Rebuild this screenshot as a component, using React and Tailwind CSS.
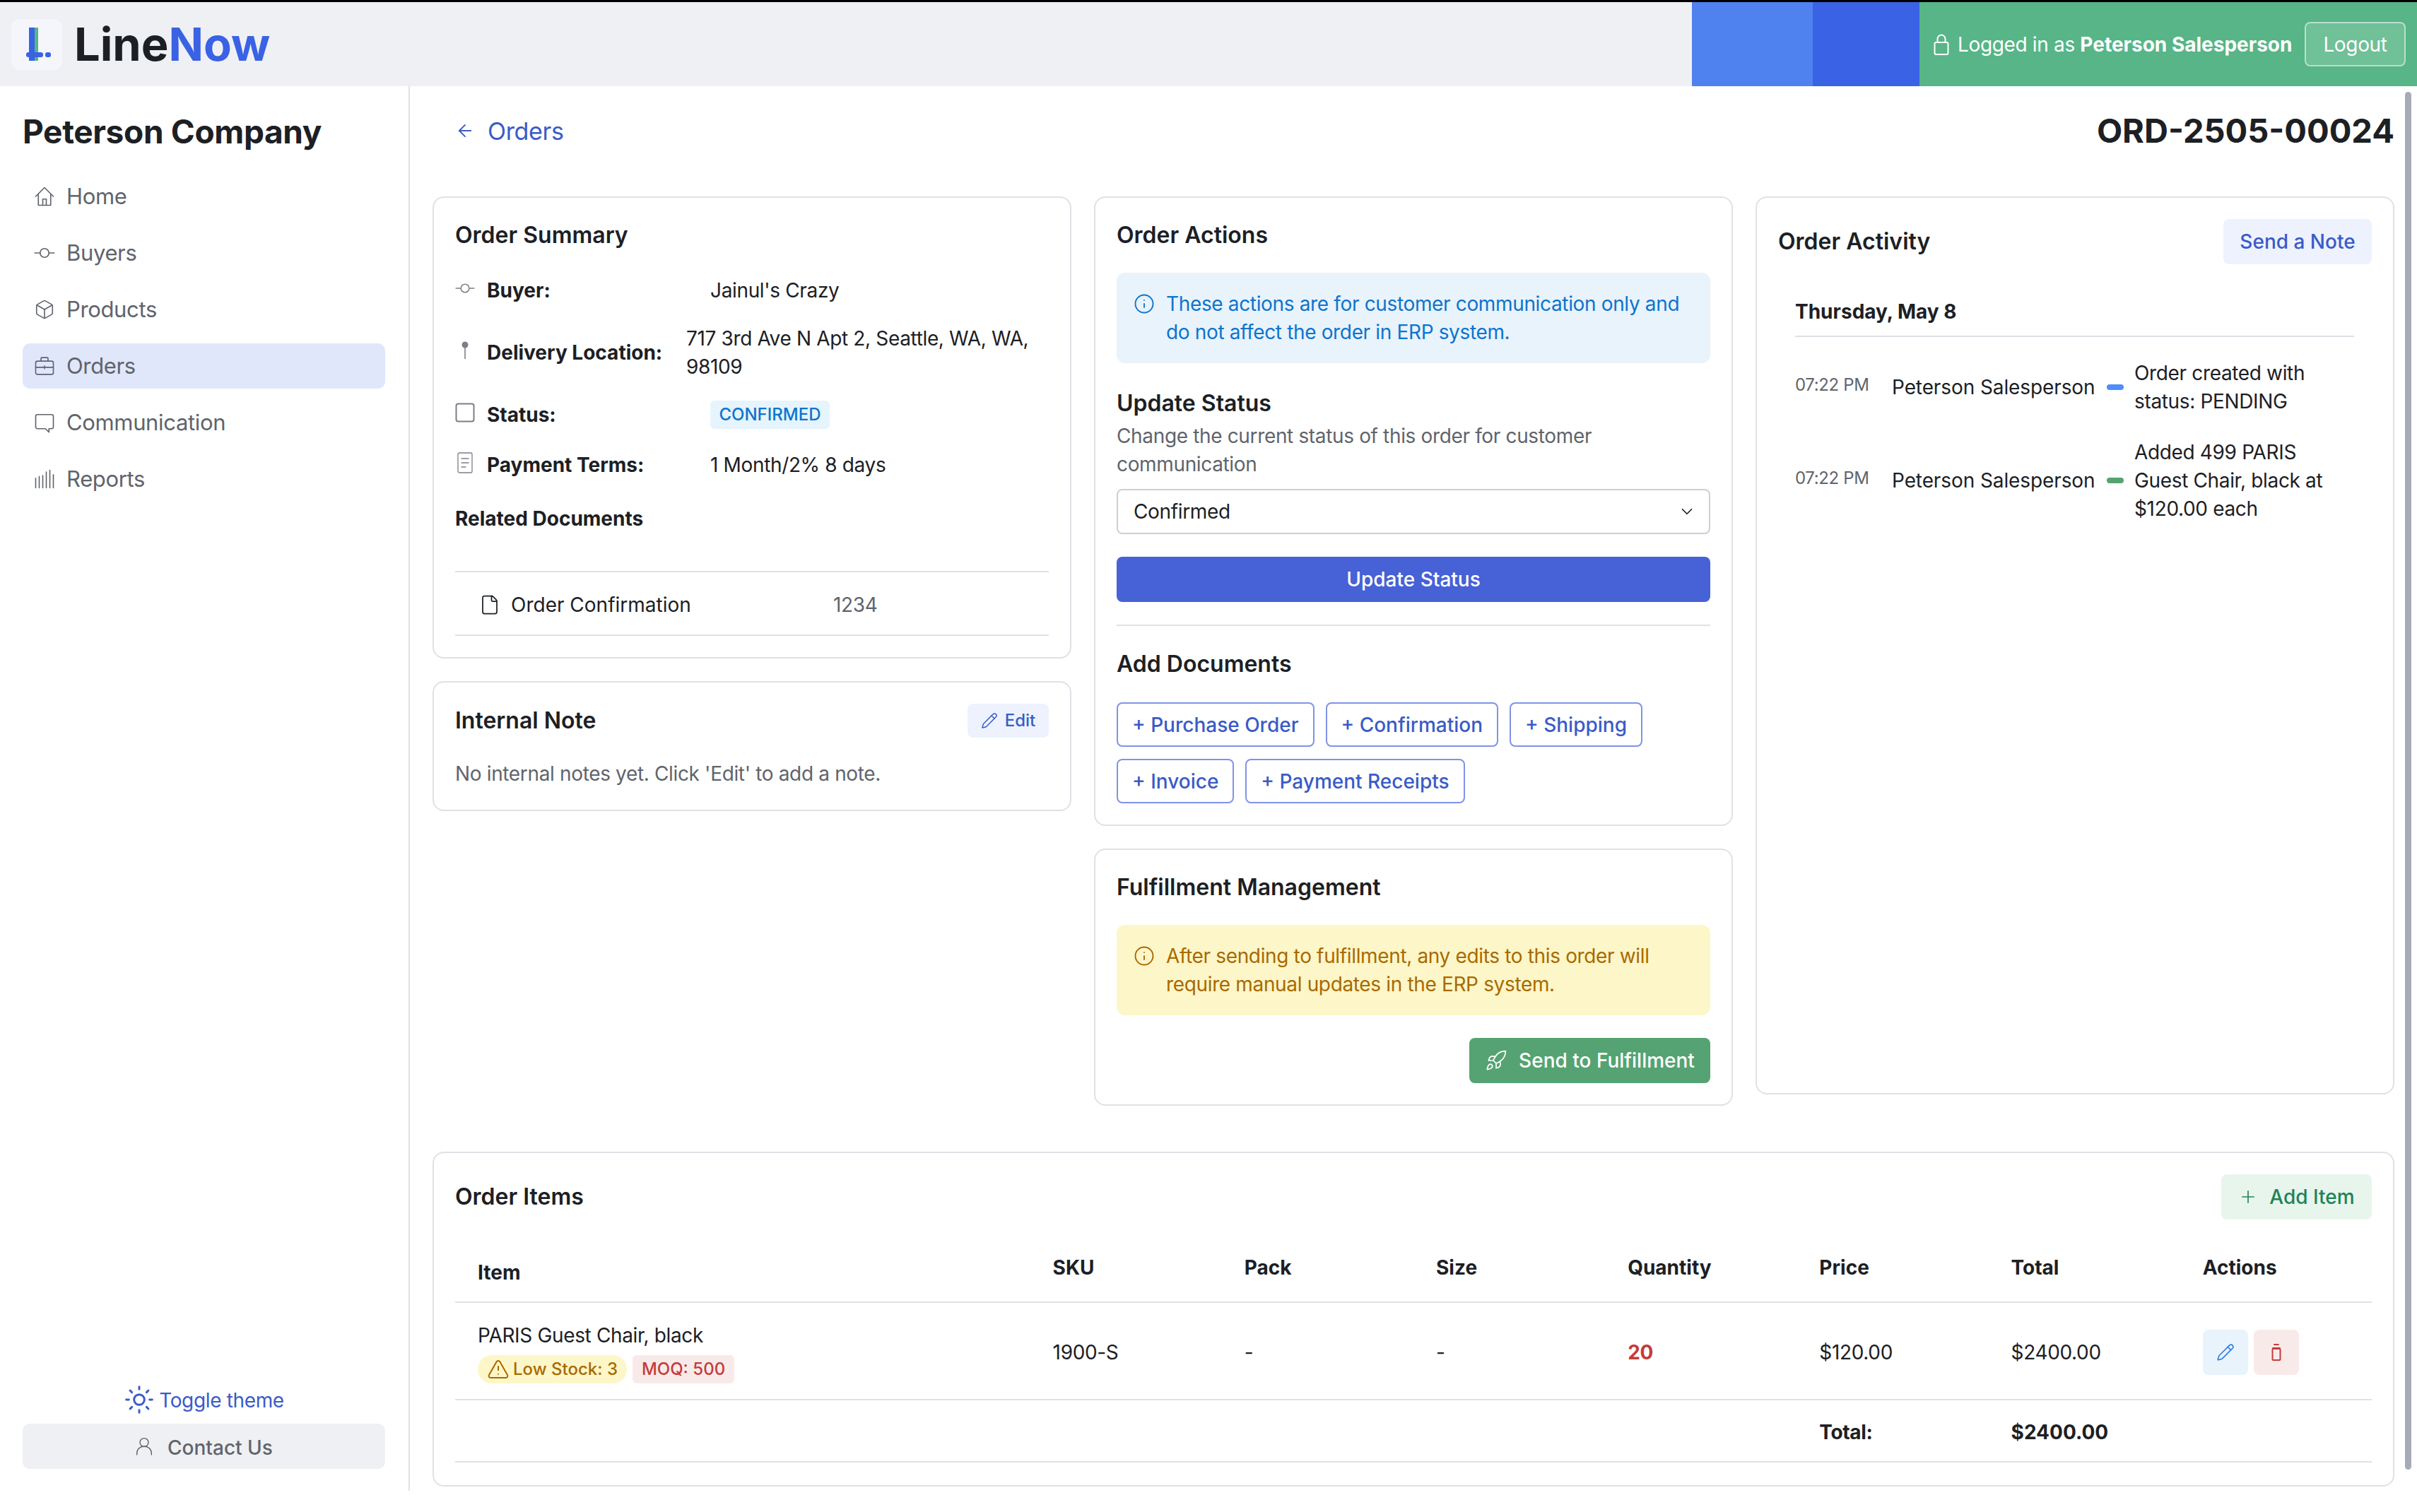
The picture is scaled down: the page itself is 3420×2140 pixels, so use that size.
import React from "react";
import { ArrowLeft, ChevronDown, File, Info, Pencil, Plus, Rocket, Sun, Box, TriangleAlert } from "lucide-react";

const Ico = ({ children, className = "", w = 24, h = 24 }) => (
  <svg viewBox={`0 0 ${w} ${h}`} fill="none" stroke="currentColor" strokeWidth="1.3" strokeLinecap="round" strokeLinejoin="round" className={className}>
    {children}
  </svg>
);

const HomeIcon = ({ className }) => (
  <Ico className={className}>
    <path d="M2 12 12 2l10 10" />
    <path d="M5 9.5V22h14V9.5" />
    <path d="M10 22v-7h4v7" />
  </Ico>
);
const CommitIcon = ({ className }) => (
  <Ico className={className}>
    <circle cx="12" cy="12" r="5" />
    <path d="M1 12h6M17 12h6" />
  </Ico>
);
const BriefIcon = ({ className }) => (
  <Ico className={className}>
    <rect x="2" y="6.5" width="20" height="15" rx="2" />
    <path d="M8 6.5V3.5a1 1 0 0 1 1-1h6a1 1 0 0 1 1 1v3" />
    <path d="M2 13.5h20M12 12v3" />
  </Ico>
);
const ChatIcon = ({ className }) => (
  <Ico className={className}>
    <path d="M4 3h16a2 2 0 0 1 2 2v12a2 2 0 0 1-2 2h-3v4l-4-4H4a2 2 0 0 1-2-2V5a2 2 0 0 1 2-2Z" />
  </Ico>
);
const BarsIcon = ({ className }) => (
  <Ico className={className}>
    <path d="M2 22v-11M6 22v-13M10 22v-14M14 22v-18M18 22V2M22 22V7" />
  </Ico>
);
const PinIcon = ({ className }) => (
  <svg viewBox="0 0 14 26" fill="none" className={className}>
    <circle cx="7" cy="5" r="4.5" fill="currentColor" />
    <path d="M7 9v16" stroke="currentColor" strokeWidth="1.6" />
  </svg>
);
const DocIcon = ({ className }) => (
  <Ico className={className} w={22} h={30}>
    <rect x="1" y="1" width="20" height="28" rx="2" />
    <path d="M6 9h10M6 15h10M6 21h6" />
  </Ico>
);
const SquareIcon = ({ className }) => (
  <Ico className={className} w={28} h={28}>
    <rect x="1.5" y="1.5" width="25" height="25" rx="3" strokeWidth="2" />
  </Ico>
);
const LockIcon = ({ className }) => (
  <Ico className={className} w={22} h={30}>
    <rect x="1.5" y="12" width="19" height="17" rx="2" strokeWidth="2" />
    <path d="M5.5 12V7a5.5 5.5 0 0 1 11 0v5" strokeWidth="2" />
  </Ico>
);
const UserIcon = ({ className }) => (
  <Ico className={className}>
    <circle cx="12" cy="7" r="5.5" />
    <path d="M2.5 23v-2a9.5 9 0 0 1 19 0v2" />
  </Ico>
);
const TrashIcon = ({ className }) => (
  <Ico className={className} w={18} h={26}>
    <path d="M4 7h10M6 2h6" strokeWidth="2" />
    <rect x="3.5" y="8" width="11" height="16" rx="1" strokeWidth="2" />
  </Ico>
);

const NavItem = ({ icon: I, label, active }) => (
  <div className={`flex items-center h-[64px] rounded-[10px] pl-[16px] text-[31px] text-[#60646c] ${active ? "bg-[#e0e7fb]" : ""}`}>
    <I className="w-[30px] h-[30px] mr-[16px] shrink-0" strokeWidth={1.3} />
    {label}
  </div>
);

const Card = ({ className = "", children }) => (
  <section className={`border-2 border-[#e0e1e6] rounded-[16px] p-[30px] bg-white ${className}`}>{children}</section>
);
const H = ({ children, className = "" }) => (
  <h2 className={`text-[32px] leading-[46px] font-semibold tracking-normal text-[#1c2024] ${className}`}>{children}</h2>
);

const Field = ({ icon, label, className = "", children }) => (
  <div className={`flex items-center ${className}`}>
    <span className="w-[28px] mr-[17px] flex justify-center shrink-0 text-[#7b7f87] mb-[6px]">{icon}</span>
    <span className="w-[316px] shrink-0 text-[28px] leading-[40px] font-bold tracking-normal text-[#1c2024]">{label}</span>
    {children}
  </div>
);

const DocBtn = ({ children }) => (
  <button className="h-[63px] px-[20px] border-2 border-[#8093e6] rounded-[8px] text-[28px] tracking-normal text-[#3a5bc7] font-medium bg-white">{children}</button>
);

const Th = ({ children, className = "" }) => (
  <th className={`text-left align-top text-[28px] leading-[40px] font-bold tracking-normal text-[#1c2024] pt-[25px] ${className}`}>{children}</th>
);
const Td = ({ children, className = "", colSpan }) => (
  <td colSpan={colSpan} className={`text-[28px] leading-[40px] text-[#1c2024] align-middle pt-[4px] ${className}`}>{children}</td>
);

export default function App() {
  return (
    <div className="w-full h-[2140px] bg-white font-['Inter',sans-serif] tracking-[-0.35px] overflow-hidden">
      <header className="h-[122px] border-t-[3px] border-black bg-[#eff0f3] flex">
        <div className="flex items-center pl-[16px]">
          <div className="w-[72px] h-[72px] rounded-[12px] bg-[#f4f6fb] flex items-center justify-center">
            <svg viewBox="0 0 72 72" className="w-[72px] h-[72px]">
              <rect x="25" y="12" width="8" height="47" fill="#3a62e4" />
              <rect x="33" y="12" width="5" height="47" fill="#57b587" />
              <rect x="21" y="47" width="24" height="7" rx="3" fill="#3a62e4" />
              <rect x="48" y="47" width="8" height="7" rx="3" fill="#3a62e4" />
            </svg>
          </div>
          <div className="ml-[17px] text-[65px] leading-none font-bold tracking-normal text-[#1c2024]">
            Line<span className="text-[#3a62e4]">Now</span>
          </div>
        </div>
        <div className="flex-1" />
        <div className="w-[171px] bg-[#4f82ee]" />
        <div className="w-[151px] bg-[#3a62e4]" />
        <div className="w-[704px] bg-[#57b587] flex items-center pl-[20px] text-white">
          <LockIcon className="w-[22px] h-[30px]" />
          <span className="ml-[12px] w-[491px] text-[28px] leading-[40px] whitespace-nowrap">
            Logged in as <b className="font-bold tracking-normal">Peterson Salesperson</b>
          </span>
          <button className="w-[143px] h-[63px] rounded-[8px] border-2 border-white/50 bg-white/15 text-[28px] text-white">Logout</button>
        </div>
      </header>

      <div className="flex h-[1988px]">
        <aside className="w-[580px] shrink-0 border-r-2 border-[#e0e1e6] flex flex-col pl-[32px] pr-[33px] pt-[36px] pb-[31px]">
          <h1 className="text-[46px] leading-[56px] font-bold text-[#1c2024] whitespace-nowrap">Peterson Company</h1>
          <nav className="mt-[32px] flex flex-col gap-[16px]">
            <NavItem icon={HomeIcon} label="Home" />
            <NavItem icon={CommitIcon} label="Buyers" />
            <NavItem icon={Box} label="Products" />
            <NavItem icon={BriefIcon} label="Orders" active />
            <NavItem icon={ChatIcon} label="Communication" />
            <NavItem icon={BarsIcon} label="Reports" />
          </nav>
          <div className="mt-auto flex items-center justify-center text-[#3a5bc7] text-[28px] leading-[40px] mb-[12px]">
            <Sun className="w-[44px] h-[44px] mr-[6px]" strokeWidth={1.6} />
            <span className="pt-[2px]">Toggle theme</span>
          </div>
          <button className="h-[64px] rounded-[10px] bg-[#eff0f3] flex items-center justify-center text-[28px] tracking-normal text-[#60646c] font-medium">
            <UserIcon className="w-[26px] h-[32px] mr-[20px]" />
            <span className="pt-[3px]">Contact Us</span>
          </button>
        </aside>

        <main className="flex-1 relative overflow-hidden pl-[32px] pr-[32px] pt-[35px]">
          <div className="flex items-center justify-between h-[56px]">
            <div className="flex items-center pl-[32px] text-[#3a5bc7] text-[34px]">
              <ArrowLeft className="w-[28px] h-[28px] mr-[18px]" strokeWidth={1.6} />
              Orders
            </div>
            <div className="text-[47px] font-bold tracking-normal text-[#1c2024]">ORD-2505-00024</div>
          </div>

          <div className="mt-[65px] grid grid-cols-3 gap-x-[32px] items-start">
            <div className="flex flex-col gap-[32px]">
              <Card>
                <H>Order Summary</H>
                <Field className="mt-[35px]" label="Buyer:" icon={<CommitIcon className="w-[28px] h-[28px]" />}>
                  <span className="text-[28px] leading-[40px] text-[#1c2024]">Jainul's Crazy</span>
                </Field>
                <div className="mt-[28px] flex items-center">
                  <span className="w-[28px] mr-[17px] flex justify-center shrink-0 text-[#7b7f87] mb-[6px]"><PinIcon className="w-[14px] h-[26px]" /></span>
                  <span className="w-[282px] shrink-0 text-[28px] leading-[40px] font-bold tracking-normal text-[#1c2024]">Delivery Location:</span>
                  <span className="text-[28px] leading-[40px] text-[#1c2024]">717 3rd Ave N Apt 2, Seattle, WA, WA, 98109</span>
                </div>
                <Field className="mt-[28px]" label="Status:" icon={<SquareIcon className="w-[28px] h-[28px]" />}>
                  <span className="h-[40px] w-[169px] rounded-[6px] bg-[#e6f4fe] text-[#0d74ce] text-[24px] tracking-normal font-medium flex items-center justify-center">CONFIRMED</span>
                </Field>
                <Field className="mt-[31px]" label="Payment Terms:" icon={<DocIcon className="w-[22px] h-[30px]" />}>
                  <span className="text-[28px] leading-[40px] text-[#1c2024]">1 Month/2% 8 days</span>
                </Field>
                <div className="mt-[36px] text-[28px] leading-[40px] font-bold tracking-normal text-[#1c2024]">Related Documents</div>
                <div className="mt-[54px] border-y-2 border-[#e0e1e6] h-[92px] flex items-center pl-[34px] pt-[3px] text-[28px]">
                  <File className="w-[30px] h-[32px] text-[#1c2024]" strokeWidth={1.4} />
                  <span className="ml-[15px] w-[456px] tracking-normal text-[#1c2024]">Order Confirmation</span>
                  <span className="text-[#60646c]">1234</span>
                </div>
              </Card>
              <Card>
                <div className="flex items-center justify-between">
                  <H>Internal Note</H>
                  <button className="h-[48px] w-[115px] rounded-[8px] bg-[#edf2fe] text-[#3a5bc7] text-[24px] tracking-normal font-medium flex items-center justify-center">
                    <Pencil className="w-[24px] h-[24px] mr-[10px]" strokeWidth={1.5} />
                    Edit
                  </button>
                </div>
                <p className="mt-[31px] mb-[1px] text-[28px] leading-[40px] text-[#60646c]">No internal notes yet. Click 'Edit' to add a note.</p>
              </Card>
            </div>

            <div className="flex flex-col gap-[32px]">
              <Card>
                <H>Order Actions</H>
                <div className="mt-[30px] h-[128px] rounded-[12px] bg-[#e8f3fc] text-[#0d74ce] pl-[24px] pr-[20px] py-[24px] flex text-[28px] leading-[40px]">
                  <Info className="w-[30px] h-[30px] mt-[5px] mr-[16px] shrink-0" strokeWidth={1.5} />
                  <p>These actions are for customer communication only and do not affect the order in ERP system.</p>
                </div>
                <H className="mt-[34px]">Update Status</H>
                <p className="mt-[3px] text-[28px] leading-[40px] text-[#60646c]">Change the current status of this order for customer communication</p>
                <div className="mt-[15px] h-[64px] rounded-[8px] border-2 border-[#cdced6] flex items-center justify-between pl-[22px] pr-[18px] text-[28px] text-[#1c2024]">
                  Confirmed
                  <ChevronDown className="w-[26px] h-[26px]" strokeWidth={1.6} />
                </div>
                <button className="mt-[32px] w-full h-[64px] rounded-[8px] bg-[#4761d6] text-white text-[28px] tracking-normal font-medium">Update Status</button>
                <div className="mt-[32px] h-[2px] bg-[#e0e1e6]" />
                <H className="mt-[31px]">Add Documents</H>
                <div className="mt-[31px] flex flex-wrap gap-x-[16px] gap-y-[17px]">
                  <DocBtn>+ Purchase Order</DocBtn>
                  <DocBtn>+ Confirmation</DocBtn>
                  <DocBtn>+ Shipping</DocBtn>
                  <DocBtn>+ Invoice</DocBtn>
                  <DocBtn>+ Payment Receipts</DocBtn>
                </div>
              </Card>
              <Card>
                <H>Fulfillment Management</H>
                <div className="mt-[30px] h-[128px] rounded-[12px] bg-[#fdf6c8] text-[#a86a00] pl-[24px] pr-[20px] py-[24px] flex text-[28px] leading-[40px]">
                  <Info className="w-[30px] h-[30px] mt-[5px] mr-[16px] shrink-0" strokeWidth={1.5} />
                  <p>After sending to fulfillment, any edits to this order will require manual updates in the ERP system.</p>
                </div>
                <div className="mt-[32px] flex justify-end">
                  <button className="h-[64px] w-[341px] rounded-[8px] bg-[#55a372] text-white text-[28px] tracking-normal font-medium flex items-center justify-center">
                    <Rocket className="w-[32px] h-[32px] mr-[16px]" strokeWidth={1.3} />
                    Send to Fulfillment
                  </button>
                </div>
              </Card>
            </div>

            <Card className="h-[1271px]">
              <div className="flex items-center justify-between">
                <H>Order Activity</H>
                <button className="h-[64px] w-[210px] rounded-[8px] bg-[#edf2fe] text-[#3a5bc7] text-[28px] tracking-normal font-medium">Send a Note</button>
              </div>
              <div className="pl-[24px] pr-[25px]">
                <div className="mt-[47px] pb-[14px] border-b-2 border-[#e0e1e6] text-[28px] leading-[40px] font-bold tracking-normal text-[#1c2024]">Thursday, May 8</div>
                <div className="mt-[31px] flex items-center">
                  <span className="w-[137px] shrink-0 text-[24px] text-[#60646c] mb-[6px]">07:22 PM</span>
                  <span className="w-[287px] shrink-0 text-[28px] tracking-[-0.1px] text-[#1c2024] whitespace-nowrap">Peterson Salesperson</span>
                  <span className="ml-[17px] w-[24px] h-[8px] rounded-full bg-[#4f8ef7] shrink-0" />
                  <p className="ml-[15px] text-[28px] leading-[40px] text-[#1c2024]">Order created with status: PENDING</p>
                </div>
                <div className="mt-[32px] flex items-center">
                  <span className="w-[137px] shrink-0 text-[24px] text-[#60646c] mb-[6px]">07:22 PM</span>
                  <span className="w-[287px] shrink-0 text-[28px] tracking-[-0.1px] text-[#1c2024] whitespace-nowrap">Peterson Salesperson</span>
                  <span className="ml-[17px] w-[24px] h-[8px] rounded-full bg-[#55a372] shrink-0" />
                  <p className="ml-[15px] text-[28px] leading-[40px] text-[#1c2024]">Added 499 PARIS Guest Chair, black at $120.00 each</p>
                </div>
              </div>
            </Card>
          </div>

          <Card className="mt-[65px] !pb-[32px]">
            <div className="flex items-center justify-between">
              <H>Order Items</H>
              <button className="h-[64px] w-[213px] rounded-[8px] bg-[#e8f5ec] text-[#218358] text-[28px] tracking-normal font-medium flex items-center justify-center">
                <Plus className="w-[28px] h-[28px] mr-[16px]" strokeWidth={1.4} />
                Add Item
              </button>
            </div>
            <table className="mt-[23px] w-full table-fixed">
              <colgroup>
                <col className="w-[30%]" />
                <col className="w-[10%]" /><col className="w-[10%]" /><col className="w-[10%]" /><col className="w-[10%]" /><col className="w-[10%]" /><col className="w-[10%]" /><col className="w-[10%]" />
              </colgroup>
              <thead>
                <tr className="h-[94px] border-b-2 border-[#e0e1e6]">
                  <Th className="pl-[32px] !pt-[32px]">Item</Th>
                  <Th className="pl-[32px]">SKU</Th>
                  <Th className="pl-[32px]">Pack</Th>
                  <Th className="pl-[32px]">Size</Th>
                  <Th className="pl-[32px]">Quantity</Th>
                  <Th className="pl-[32px]">Price</Th>
                  <Th className="pl-[32px]">Total</Th>
                  <Th className="pl-[32px]">Actions</Th>
                </tr>
              </thead>
              <tbody>
                <tr className="h-[138px] border-b-2 border-[#e0e1e6]">
                  <Td className="pl-[32px]">
                    <div>PARIS Guest Chair, black</div>
                    <div className="mt-[8px] flex gap-[8px] text-[24px] tracking-normal">
                      <span className="h-[40px] w-[211px] rounded-full bg-[#fdf6c8] text-[#a86a00] flex items-center justify-center font-medium">
                        <TriangleAlert className="w-[32px] h-[32px] mr-[5px]" strokeWidth={1.5} />
                        Low Stock: 3
                      </span>
                      <span className="h-[40px] w-[144px] rounded-[6px] bg-[#f9eaea] text-[#c43c3c] flex items-center justify-center font-medium">MOQ: 500</span>
                    </div>
                  </Td>
                  <Td className="pl-[32px]">1900-S</Td>
                  <Td className="pl-[32px]">-</Td>
                  <Td className="pl-[32px]">-</Td>
                  <Td className="pl-[32px] font-bold !text-[#c43c3c]">20</Td>
                  <Td className="pl-[32px]">$120.00</Td>
                  <Td className="pl-[32px]">$2400.00</Td>
                  <Td className="pl-[32px]">
                    <div className="flex gap-[8px]">
                      <button className="w-[64px] h-[64px] rounded-[8px] bg-[#e8f3fc] text-[#2f7fe0] flex items-center justify-center"><Pencil className="w-[26px] h-[26px]" strokeWidth={1.5} /></button>
                      <button className="w-[64px] h-[64px] rounded-[8px] bg-[#f9eaea] text-[#c43c3c] flex items-center justify-center"><TrashIcon className="w-[18px] h-[26px]" /></button>
                    </div>
                  </Td>
                </tr>
                <tr className="h-[88px] border-b-2 border-[#e0e1e6]">
                  <Td colSpan={5} />
                  <Td className="pl-[32px] font-bold">Total:</Td>
                  <Td className="pl-[32px] font-bold tracking-normal">$2400.00</Td>
                  <Td />
                </tr>
              </tbody>
            </table>
          </Card>

          <div className="absolute top-[8px] right-[8px] w-[9px] h-[1950px] rounded-full bg-[#a8abb7]" />
        </main>
      </div>
    </div>
  );
}
